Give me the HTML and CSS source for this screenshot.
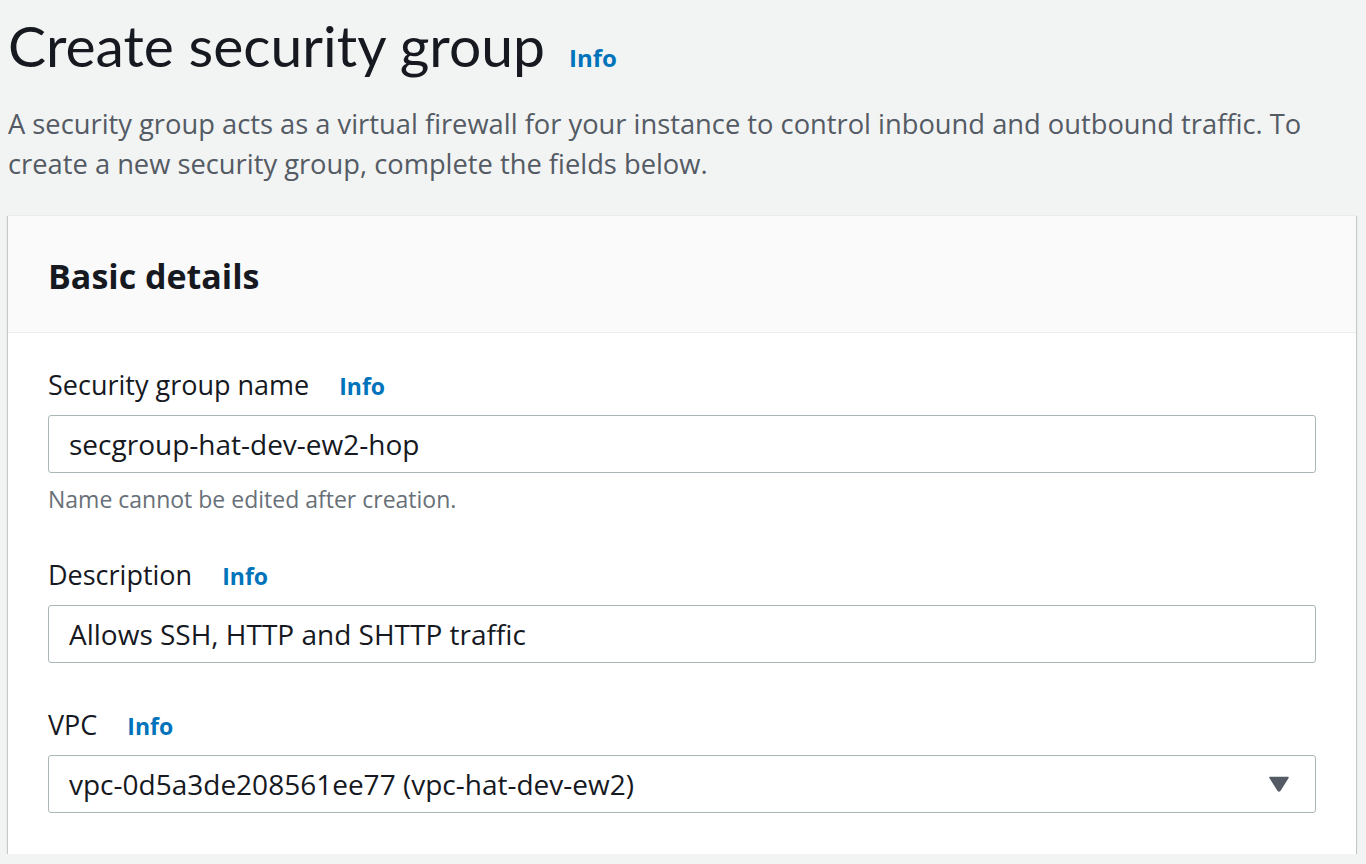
FILE: index.html
```html
<!DOCTYPE html>
<html lang="en">
<head>
<meta charset="utf-8">
<title>Create security group</title>
<link rel="stylesheet" href="styles.css">
</head>
<body>
<main class="page">
  <header class="page-header">
    <div class="title-row">
      <h1 class="title">Create security group</h1>
      <a class="info info-title" href="#">Info</a>
    </div>
    <p class="page-desc">A security group acts as a virtual firewall for your instance to control inbound and outbound traffic. To create a new security group, complete the fields below.</p>
  </header>

  <section class="card">
    <div class="card-header">
      <h2 class="card-title">Basic details</h2>
    </div>
    <div class="card-body">
      <div class="field">
        <div class="label-row">
          <label class="label" for="sg-name">Security group name</label>
          <a class="info" href="#">Info</a>
        </div>
        <input class="input" id="sg-name" type="text" value="secgroup-hat-dev-ew2-hop">
        <div class="hint">Name cannot be edited after creation.</div>
      </div>

      <div class="field">
        <div class="label-row">
          <label class="label" for="sg-desc">Description</label>
          <a class="info" href="#">Info</a>
        </div>
        <input class="input" id="sg-desc" type="text" value="Allows SSH, HTTP and SHTTP traffic">
      </div>

      <div class="field">
        <div class="label-row">
          <label class="label" for="sg-vpc">VPC</label>
          <a class="info" href="#">Info</a>
        </div>
        <div class="select" id="sg-vpc">
          <span class="select-value">vpc-0d5a3de208561ee77 (vpc-hat-dev-ew2)</span>
          <svg class="caret" width="20" height="16" viewBox="0 0 20 16" aria-hidden="true">
            <path d="M1 1.5 H19 L10.8 14.6 Q10 15.6 9.2 14.6 Z" fill="#545b64" stroke="#545b64" stroke-width="1.5" stroke-linejoin="round"/>
          </svg>
        </div>
      </div>
    </div>
  </section>
</main>
</body>
</html>
```

FILE: styles.css
```css
* { box-sizing: border-box; }

html, body {
  margin: 0;
  padding: 0;
  background: #f2f3f3;
}

body {
  font-family: "Open Sans", "Noto Sans", sans-serif;
  color: #16191f;
}

.page {
  padding: 0 10px 0 8px;
}

.title-row {
  display: flex;
  align-items: baseline;
  gap: 24px;
  height: 90px;
}

.title {
  margin: 0;
  font-family: Lato, "Open Sans", sans-serif;
  font-size: 57px;
  line-height: 90px;
  font-weight: 400;
  color: #16191f;
}

.info {
  color: #0073bb;
  font-weight: 700;
  text-decoration: none;
  font-size: 23px;
}

.info-title {
  font-size: 24px;
}

.page-desc {
  margin: 14px 0 31px;
  font-size: 27.3px;
  line-height: 40px;
  color: #545b64;
}

.card {
  background: #fff;
  border-top: 1px solid #eaeded;
  box-shadow: 0 1px 1px 0 rgba(0, 28, 36, 0.3),
              1px 1px 1px 0 rgba(0, 28, 36, 0.15),
              -1px 1px 1px 0 rgba(0, 28, 36, 0.15);
}

.card-header {
  height: 117px;
  background: #fafafa;
  border-bottom: 1px solid #eaeded;
  display: flex;
  align-items: center;
  padding: 3px 40px 0;
}

.card-title {
  margin: 0;
  font-size: 34px;
  font-weight: 700;
  line-height: 40px;
  color: #16191f;
}

.card-body {
  padding: 34px 40px 41px;
  display: flex;
  flex-direction: column;
  gap: 44px;
}

.field {
  display: flex;
  flex-direction: column;
}

.label-row {
  display: flex;
  align-items: baseline;
  gap: 30px;
  height: 36px;
  line-height: 36px;
  margin-bottom: 12px;
}

.label {
  font-size: 27px;
  color: #16191f;
}

.input {
  width: 100%;
  height: 58px;
  border: 1px solid #aab7b8;
  border-radius: 3px;
  padding: 0 20px;
  font: inherit;
  font-size: 28px;
  color: #16191f;
  background: #fff;
  outline: none;
}

.hint {
  margin-top: 12px;
  font-size: 23px;
  line-height: 28px;
  color: #687078;
}

.select {
  display: flex;
  align-items: center;
  justify-content: space-between;
  height: 58px;
  border: 1px solid #aab7b8;
  border-radius: 3px;
  padding: 0 26px 0 20px;
  font-size: 28px;
  color: #16191f;
  background: #fff;
}

.caret {
  display: block;
}
```
